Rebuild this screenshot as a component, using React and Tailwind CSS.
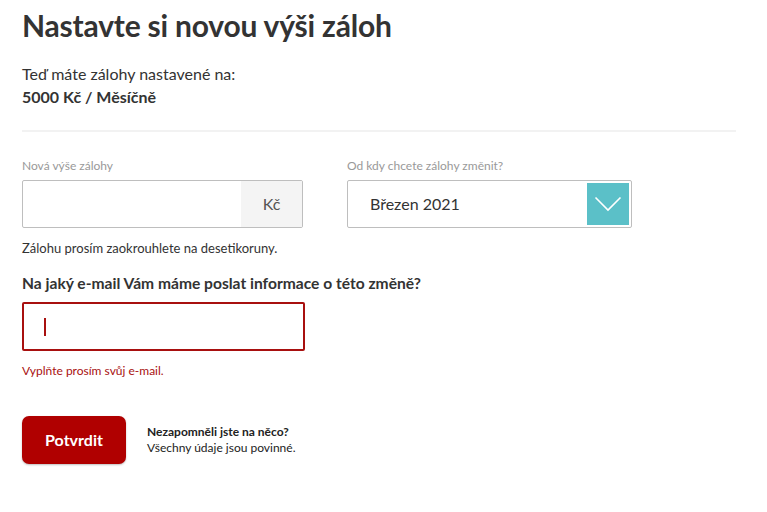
import React from 'react'

const App = () => {
  return (
    <div className="min-h-screen bg-white text-[#333] font-['Lato','Noto_Sans',sans-serif]">
      <div className="px-[22px] pt-[6px] w-[758px]">
        {/* Header */}
        <h1 className="text-[30px] leading-[38px] font-bold text-[#333] tracking-[-0.2px]">
          Nastavte si novou výši záloh
        </h1>

        <div className="mt-[18px] text-[16px] leading-[23px]">
          <p>Teď máte zálohy nastavené na:</p>
          <p className="font-bold">5000 Kč / Měsíčně</p>
        </div>

        <div className="mt-[22px] h-[2px] bg-[#f2f2f2]"></div>

        {/* Amount + date */}
        <div className="mt-[26px] flex gap-[44px]">
          <div className="w-[281px]">
            <label className="block text-[12px] leading-[16px] text-[#999] mb-[6px]">Nová výše zálohy</label>
            <div className="flex h-[48px] border border-[#bebebe] rounded-[2px] overflow-hidden">
              <input type="text" className="flex-1 min-w-0 px-3 outline-none" />
              <div className="w-[61px] bg-[#f4f4f4] flex items-center justify-center text-[16px] text-[#555]">Kč</div>
            </div>
          </div>
          <div className="w-[285px]">
            <label className="block text-[12px] leading-[16px] text-[#999] mb-[6px]">Od kdy chcete zálohy změnit?</label>
            <div className="flex items-center h-[48px] border border-[#bebebe] rounded-[2px] pl-[22px] pr-[2px]">
              <span className="flex-1 text-[16px] text-[#333]">Březen 2021</span>
              <div className="w-[42px] h-[42px] bg-[#5bc0c8] flex items-center justify-center">
                <svg width="28" height="16" viewBox="0 0 28 16" fill="none">
                  <path d="M1.5 1.5 L14 14 L26.5 1.5" stroke="#fff" strokeWidth="1.6" />
                </svg>
              </div>
            </div>
          </div>
        </div>

        <p className="mt-[12px] text-[13px] leading-[16px] text-[#333]">Zálohu prosím zaokrouhlete na desetikoruny.</p>

        {/* Email */}
        <h2 className="mt-[16px] text-[15.6px] leading-[22px] font-bold text-[#333]">
          Na jaký e-mail Vám máme poslat informace o této změně?
        </h2>
        <div className="mt-[8px] w-[283px] h-[49px] border-2 border-[#a8100f] rounded-[2px] flex items-center pl-[20px]">
          <div className="w-[2px] h-[18px] bg-[#a8100f]"></div>
        </div>
        <p className="mt-[12px] text-[12px] leading-[16px] text-[#a8100f]">Vyplňte prosím svůj e-mail.</p>

        {/* Submit */}
        <div className="mt-[37px] flex items-center gap-[21px]">
          <button className="w-[104px] h-[48px] rounded-[7px] bg-[#b00000] text-white text-[16px] font-bold shadow-[0_1px_2px_rgba(0,0,0,0.25)]">
            Potvrdit
          </button>
          <div className="text-[12px] leading-[16px] text-[#222]">
            <p className="font-bold">Nezapomněli jste na něco?</p>
            <p>Všechny údaje jsou povinné.</p>
          </div>
        </div>
      </div>
    </div>
  )
}

export default App
